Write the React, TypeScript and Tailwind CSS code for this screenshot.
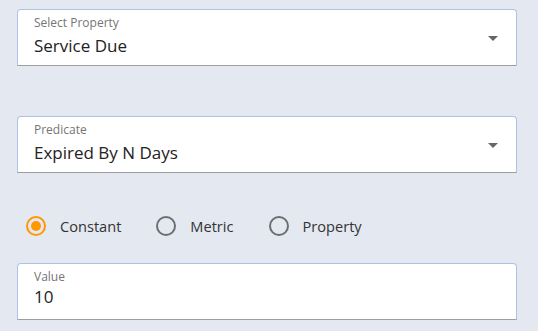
import React from 'react'

const font = { fontFamily: '"Open Sans", "Noto Sans", sans-serif' }

function SelectBox({ label, value }: { label: string; value: string }) {
  return (
    <div className="relative h-[57px] w-[500px] rounded-t-[4px] border border-b-[#9e9e9e] border-x-[#aec3e3] border-t-[#aec3e3] bg-white">
      <div className="pl-4 pt-[5px] text-[12px] leading-[16px] text-[#757575]">{label}</div>
      <div className="pl-4 pt-[3px] text-[17px] leading-[24px] text-[#222]">{value}</div>
      <svg className="absolute right-[18px] top-[26px]" width="10" height="5" viewBox="0 0 10 5">
        <path d="M0 0h10L5 5z" fill="#666" />
      </svg>
    </div>
  )
}

function Radio({ label, checked }: { label: string; checked?: boolean }) {
  return (
    <label className="flex items-center gap-[14px]">
      <span
        className={
          checked
            ? 'flex size-[20px] items-center justify-center rounded-full border-2 border-[#ff9800]'
            : 'flex size-[20px] items-center justify-center rounded-full border-2 border-[#6e6e6e]'
        }
      >
        {checked && <span className="size-[10px] rounded-full bg-[#ff9800]" />}
      </span>
      <span className="text-[14.6px] leading-[22px] text-[#333]">{label}</span>
    </label>
  )
}

export default function App() {
  return (
    <div className="h-[331px] w-[538px] bg-[#e4e8f0] pl-[17px] pt-[9px]" style={font}>
      <SelectBox label="Select Property" value="Service Due" />
      <div className="mt-[50px]">
        <SelectBox label="Predicate" value="Expired By N Days" />
      </div>
      <div className="ml-[9px] mt-[42px] flex items-center gap-[35px]">
        <Radio label="Constant" checked />
        <Radio label="Metric" />
        <Radio label="Property" />
      </div>
      <div className="mt-[26px] h-[57px] w-[500px] rounded-t-[4px] border border-b-[#9e9e9e] border-x-[#aec3e3] border-t-[#aec3e3] bg-white">
        <div className="pl-4 pt-[5px] text-[12px] leading-[16px] text-[#757575]">Value</div>
        <div className="pl-4 pt-[0px] text-[17px] leading-[24px] text-[#222]">10</div>
      </div>
    </div>
  )
}
